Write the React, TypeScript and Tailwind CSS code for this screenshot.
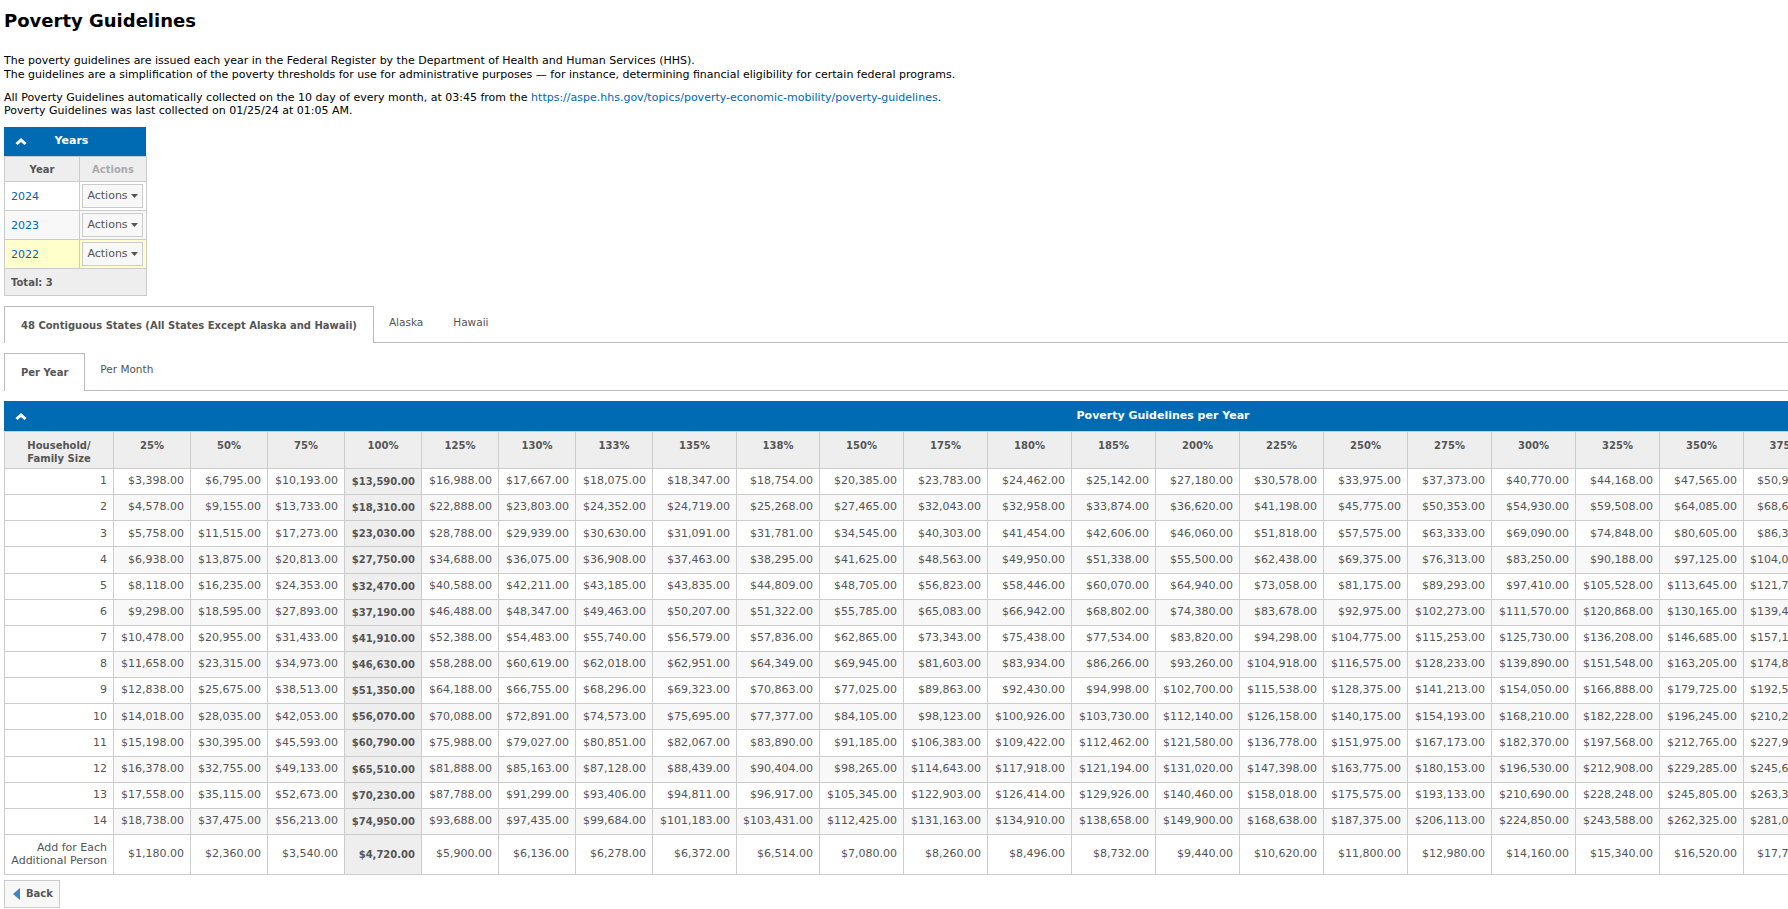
import { Fragment } from 'react'

const percents = [25, 50, 75, 100, 125, 130, 133, 135, 138, 150, 175, 180, 185, 200, 225, 250, 275, 300, 325, 350, 375, 400, 450, 500, 550, 600, 650]
const colWidths = [77, 77, 77, 77, 77, 77, 77, 84, 83, 84, 84, 84, 84, 84, 84, 84, 84, 84, 84, 84, 83, 83, 83, 83, 83, 83, 82]
const years = ['2024', '2023', '2022']

function money(value: number) {
  return '$' + value.toLocaleString('en-US') + '.00'
}

// values follow the published rule: base amount times percent, rounded to the dollar
function amount(base: number, pct: number) {
  return money(Math.round((base * pct) / 100))
}

function Chevron() {
  return (
    <svg width="12" height="9" viewBox="0 0 12 9" className="shrink-0">
      <path d="M6 1 L11.5 6 L9.5 8 L6 5 L2.5 8 L0.5 6 Z" fill="#ffffff" />
    </svg>
  )
}

function Caret() {
  return (
    <svg width="7" height="4" viewBox="0 0 7 4" className="shrink-0">
      <path d="M0 0 H7 L3.5 4 Z" fill="#555555" />
    </svg>
  )
}

function YearsPanel() {
  return (
    <div className="w-[142px] mt-[9px]">
      <div className="h-[29px] bg-[#006bb3] flex items-center pl-[11px] pr-[30px] text-white font-bold text-[11px]">
        <Chevron />
        <span className="flex-1 text-center">Years</span>
      </div>
      <table className="w-[142px] table-fixed border-collapse text-[11px] text-[#555555]">
        <colgroup>
          <col className="w-[75px]" />
          <col className="w-[67px]" />
        </colgroup>
        <thead>
          <tr className="h-[25px] bg-[#eeeeee] text-[10px] font-bold">
            <th className="border border-[#cccccc] text-center">Year</th>
            <th className="border border-[#cccccc] text-center text-[#aaaaaa]">Actions</th>
          </tr>
        </thead>
        <tbody>
          {years.map((year, i) => (
            <tr key={year} className={'h-[29px] ' + (i === 2 ? 'bg-[#ffffcc]' : i === 1 ? 'bg-[#f8f8f8]' : 'bg-white')}>
              <td className="border border-[#cccccc] pl-[6px] pt-[2px] text-[#0066b3]">{year}</td>
              <td className="border border-[#cccccc] px-[2px]">
                <button className="w-[61px] h-[24px] border border-[#cccccc] bg-[#f8f8f8] flex items-center justify-center gap-[3px] text-[11px] text-[#555555]">
                  Actions
                  <Caret />
                </button>
              </td>
            </tr>
          ))}
          <tr className="h-[27px] bg-[#eeeeee]">
            <td colSpan={2} className="border border-[#cccccc] pl-[6px] text-[10px] font-bold">Total: 3</td>
          </tr>
        </tbody>
      </table>
    </div>
  )
}

function Tabs({ items, active, className }: { items: string[]; active: string; className: string }) {
  return (
    <div className={'flex items-stretch border-b border-[#bbbbbb] ' + className}>
      {items.map((item) =>
        item === active ? (
          <div key={item} className="-mb-px border border-b-0 border-[#bbbbbb] bg-white px-[16px] flex items-center text-[10px] font-bold text-[#555555]">
            {item}
          </div>
        ) : (
          <div key={item} className="px-[15px] pb-[3px] flex items-center text-[10.5px] text-[#555555]">
            {item}
          </div>
        ),
      )}
    </div>
  )
}

function GuidelinesTable() {
  const rows = Array.from({ length: 14 }, (_, i) => i + 1)
  return (
    <div className="w-[2318px] mt-[10px]">
      <div className="h-[30px] bg-[#006bb3] flex items-center pl-[11px] pr-[23px] text-white font-bold text-[11px]">
        <Chevron />
        <span className="flex-1 text-center">Poverty Guidelines per Year</span>
      </div>
      <table className="w-[2318px] table-fixed border-collapse text-[11px] text-[#555555]">
        <colgroup>
          <col className="w-[109px]" />
          {percents.map((p, i) => (
            <col key={p} style={{ width: colWidths[i] }} />
          ))}
        </colgroup>
        <thead>
          <tr className="h-[37px] bg-[#eeeeee] text-[10px] font-bold">
            <th className="border border-[#cccccc] align-top pt-[7px] leading-[13px] text-center">
              Household/
              <br />
              Family Size
            </th>
            {percents.map((p) => (
              <th key={p} className="border border-[#cccccc] align-top pt-[7px] leading-[13px] text-center">
                {p}%
              </th>
            ))}
          </tr>
        </thead>
        <tbody>
          {rows.map((n) => {
            const base = 13590 + (n - 1) * 4720
            return (
              <tr key={n} className={'h-[26.15px] ' + (n % 2 === 0 ? 'bg-[#f8f8f8]' : 'bg-white')}>
                <td className="border border-[#cccccc] pr-[6px] text-right bg-white">{n}</td>
                {percents.map((p) => (
                  <Fragment key={p}>
                    {p === 100 ? (
                      <td className="border border-[#cccccc] pr-[6px] text-right bg-[#eeeeee] text-[10px] font-bold">{amount(base, p)}</td>
                    ) : (
                      <td className="border border-[#cccccc] pr-[6px] text-right whitespace-nowrap">{amount(base, p)}</td>
                    )}
                  </Fragment>
                ))}
              </tr>
            )
          })}
          <tr className="h-[40px] bg-white">
            <td className="border border-[#cccccc] pr-[6px] text-right leading-[13px]">
              Add for Each
              <br />
              Additional Person
            </td>
            {percents.map((p) =>
              p === 100 ? (
                <td key={p} className="border border-[#cccccc] pr-[6px] text-right bg-[#eeeeee] text-[10px] font-bold">{amount(4720, p)}</td>
              ) : (
                <td key={p} className="border border-[#cccccc] pr-[6px] text-right whitespace-nowrap">{amount(4720, p)}</td>
              ),
            )}
          </tr>
        </tbody>
      </table>
    </div>
  )
}

export default function App() {
  return (
    <main className="w-[1788px] h-[909px] overflow-hidden bg-white pl-[4px] text-black font-['DejaVu_Sans',Verdana,sans-serif]">
      <h1 className="h-[40px] flex items-center text-[18px] font-bold">Poverty Guidelines</h1>

      <div className="mt-[14px] text-[11px] leading-[14px] whitespace-nowrap">
        <p>The poverty guidelines are issued each year in the Federal Register by the Department of Health and Human Services (HHS).</p>
        <p>The guidelines are a simplification of the poverty thresholds for use for administrative purposes — for instance, determining financial eligibility for certain federal programs.</p>
        <p className="mt-[9px]">
          All Poverty Guidelines automatically collected on the 10 day of every month, at 03:45 from the{' '}
          <a className="text-[#0066b3]">https://aspe.hhs.gov/topics/poverty-economic-mobility/poverty-guidelines</a>.
        </p>
        <p className="-mt-px">Poverty Guidelines was last collected on 01/25/24 at 01:05 AM.</p>
      </div>

      <YearsPanel />

      <Tabs
        className="mt-[10px] h-[37px]"
        items={['48 Contiguous States (All States Except Alaska and Hawaii)', 'Alaska', 'Hawaii']}
        active="48 Contiguous States (All States Except Alaska and Hawaii)"
      />
      <Tabs className="mt-[10px] h-[38px]" items={['Per Year', 'Per Month']} active="Per Year" />

      <GuidelinesTable />

      <button className="mt-[5px] w-[56px] h-[28px] border border-[#cccccc] bg-[#f8f8f8] flex items-center pl-[8px] gap-[6px] text-[10px] font-bold text-[#555555]">
        <svg width="7" height="12" viewBox="0 0 7 12" className="shrink-0">
          <path d="M7 0 V12 L0 6 Z" fill="#3d85c6" />
        </svg>
        Back
      </button>
    </main>
  )
}
